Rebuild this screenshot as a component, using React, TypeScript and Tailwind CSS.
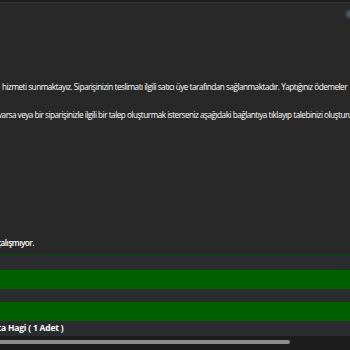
import React from 'react';

const Band: React.FC<{ green?: boolean }> = ({ green }) => (
  <div className={green ? 'h-[19px] bg-[#006000] shadow-[0_0_3px_#0b3d0b]' : 'h-[13px] bg-[#2b2c2f]'} />
);

export default function App() {
  return (
    <div className="w-[350px] h-[350px] overflow-hidden bg-[#282828] text-white font-['Open_Sans',sans-serif] flex flex-col">
      <div className="h-[3px] bg-[#1e1e1e] border-b border-[#333]" />
      <div className="relative h-[77px]">
        <div className="absolute right-[-4px] top-[7px] w-[8px] h-[8px] rounded-full bg-[#4a5a6a] blur-[1px]" />
      </div>
      <div className="flex flex-col text-[8.2px] tracking-[-0.5px] leading-[14px] whitespace-nowrap">
        <p className="pl-[2px]">hizmeti sunmaktayız. Siparişinizin teslimatı ilgili satıcı üye tarafından sağlanmaktadır. Yaptığınız ödemeler</p>
        <p className="mt-[14px] ml-[-2px]">varsa veya bir siparişinizle ilgili bir talep oluşturmak isterseniz aşağıdaki bağlantıya tıklayıp talebinizi oluşturun.</p>
        <p className="mt-[114px] ml-[-3px] font-semibold">çalışmıyor.</p>
      </div>
      <div className="mt-[4px] h-[2px] bg-[#1b3a1b]" />
      <div className="h-[14px] bg-[#2b2c2f]" />
      <Band green />
      <Band />
      <Band green />
      <div className="h-[15px] bg-[#2b2c2f] flex items-center">
        <span className="ml-[-18px] text-[8.5px] tracking-[-0.2px] font-bold whitespace-nowrap">Çanta Hagi ( 1 Adet )</span>
      </div>
      <div className="flex-1 bg-[#1c1c1c] pt-[4px]">
        <div className="w-[290px] h-[4px] rounded-r-sm bg-[#8c8c8c]" />
      </div>
    </div>
  );
}
